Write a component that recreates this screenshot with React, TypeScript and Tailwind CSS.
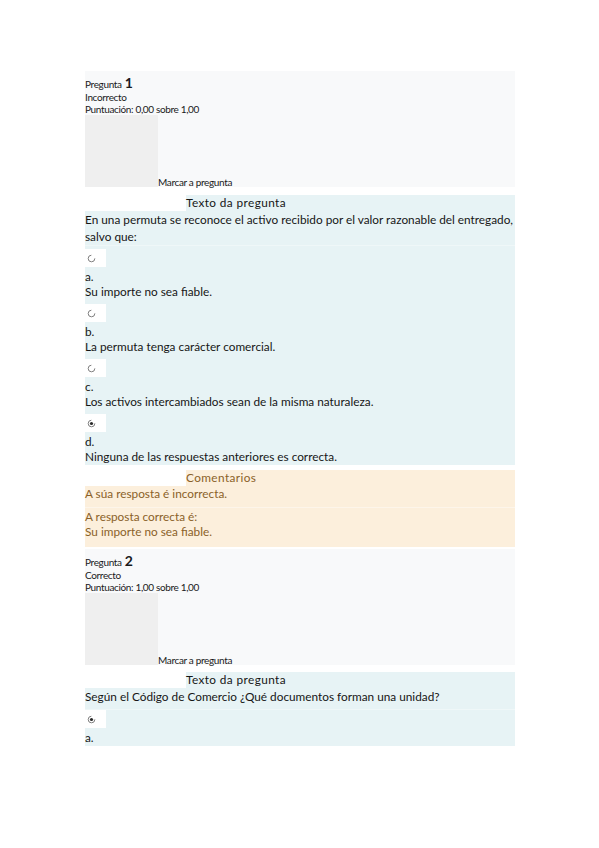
import React from 'react';

const font = { fontFamily: 'Lato, "Open Sans", sans-serif' };

function Radio({ checked }: { checked?: boolean }) {
  return (
    <div className="h-[18px]">
      <div className="w-[21px] h-[18px] bg-white flex items-center pl-[2px]">
        <svg width="9" height="9" viewBox="0 0 9 9">
          <circle cx="4.5" cy="4.5" r="3.3" fill="none" stroke="#7f7f7f" strokeWidth="1" strokeDasharray="15 5" />
          {checked && <circle cx="4.5" cy="4.5" r="1.6" fill="#2a2a2a" />}
        </svg>
      </div>
    </div>
  );
}

function Info({ n, state, score }: { n: number; state: string; score: string }) {
  return (
    <div className="bg-[#f8f9fa] text-[#1a1a1a] pt-[5px] text-[10px] tracking-[-0.35px]">
      <div className="flex items-baseline gap-[3px] h-[14px] leading-none">
        <span>Pregunta</span>
        <span className="text-[14px] font-bold tracking-normal">{n}</span>
      </div>
      <div className="leading-[12px] mt-[1px]">{state}</div>
      <div className="leading-[12px]">{score}</div>
      <div className="flex items-end">
        <div className="w-[73px] h-[72px] bg-[#efefef]" />
        <span className="leading-[10px]">Marcar a pregunta</span>
      </div>
    </div>
  );
}

function Title({ children, color }: { children: React.ReactNode; color: string }) {
  return (
    <div className="flex h-[16px]">
      <div className="w-[101px] bg-white" />
      <div className={`flex-1 text-[11.8px] leading-[16px] tracking-[0.4px] ${color}`}>{children}</div>
    </div>
  );
}

function Option({ letter, text, checked }: { letter: string; text?: string; checked?: boolean }) {
  return (
    <div>
      <Radio checked={checked} />
      <div className="leading-[15px] pt-[2px]">{letter}</div>
      {text && <div className="leading-[15px]">{text}</div>}
    </div>
  );
}

export default function App() {
  return (
    <div className="min-h-[848px] bg-white" style={font}>
      <div className="w-[430px] ml-[85px] pt-[71px] flex flex-col">
        <Info n={1} state="Incorrecto" score="Puntuación: 0,00 sobre 1,00" />

        <div className="mt-[8px] bg-[#e7f3f5] text-[#161616] text-[11.8px]">
          <Title color="text-[#161616]">Texto da pregunta</Title>
          <div className="leading-[17px] border-b border-[#eff7f8]">
            En una permuta se reconoce el activo recibido por el valor razonable del entregado, salvo que:
          </div>
          <div className="pt-[3px] flex flex-col gap-[5px] pb-[1px]">
            <Option letter="a." text="Su importe no sea fiable." />
            <Option letter="b." text="La permuta tenga carácter comercial." />
            <Option letter="c." text="Los activos intercambiados sean de la misma naturaleza." />
            <Option letter="d." text="Ninguna de las respuestas anteriores es correcta." checked />
          </div>
        </div>

        <div className="mt-[5px] bg-[#fcefdc] text-[#8a6128] text-[11.8px] leading-[15px] pb-[8px]">
          <Title color="text-[#8a6128]">Comentarios</Title>
          <div className="pb-[6px] border-b border-[#fdf5ea]">A súa resposta é incorrecta.</div>
          <div className="pt-[1px]">A resposta correcta é:</div>
          <div>Su importe no sea fiable.</div>
        </div>

        <div className="mt-[2px]">
          <Info n={2} state="Correcto" score="Puntuación: 1,00 sobre 1,00" />
        </div>

        <div className="mt-[7px] bg-[#e7f3f5] text-[#161616] text-[11.8px]">
          <Title color="text-[#161616]">Texto da pregunta</Title>
          <div className="leading-[17px] pb-[4px] border-b border-[#eff7f8]">
            Según el Código de Comercio ¿Qué documentos forman una unidad?
          </div>
          <div className="pb-[1px]">
            <Option letter="a." checked />
          </div>
        </div>
      </div>
    </div>
  );
}
